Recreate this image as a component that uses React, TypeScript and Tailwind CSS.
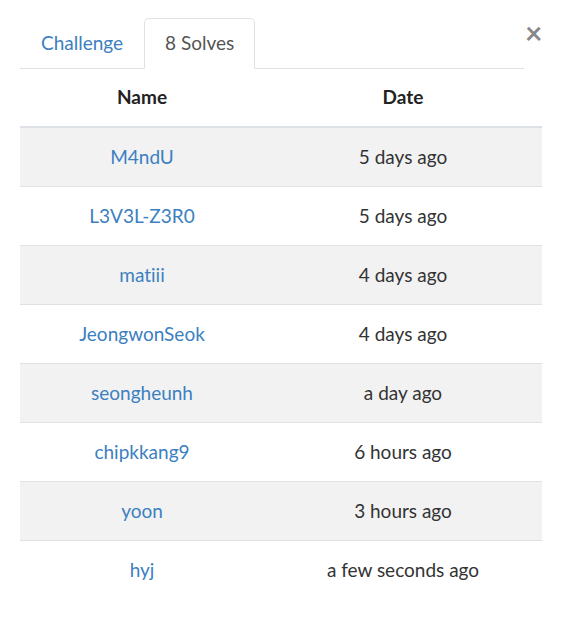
import React from 'react';

const solves = [
  { name: 'M4ndU', date: '5 days ago' },
  { name: 'L3V3L-Z3R0', date: '5 days ago' },
  { name: 'matiii', date: '4 days ago' },
  { name: 'JeongwonSeok', date: '4 days ago' },
  { name: 'seongheunh', date: 'a day ago' },
  { name: 'chipkkang9', date: '6 hours ago' },
  { name: 'yoon', date: '3 hours ago' },
  { name: 'hyj', date: 'a few seconds ago' },
];

export default function App() {
  return (
    <div className="relative w-[567px] h-[629px] bg-white font-['Lato','Noto_Sans',sans-serif] text-[19px] text-[#333] [font-variant-ligatures:none]">
      <button className="absolute left-[525px] top-[17px] text-[30px] leading-none font-bold text-[#888]">×</button>

      <div className="pt-[18px] pl-[20px]">
        {/* tabs */}
        <div className="flex w-[504px] h-[51px] border-b border-[#dee2e6]">
          <div className="h-[51px] px-[21px] flex items-center text-[#3c80c1]">Challenge</div>
          <div className="h-[51px] px-[20px] flex items-center text-[#555] bg-white border border-[#dee2e6] border-b-white rounded-t-[5px]">
            8 Solves
          </div>
        </div>

        {/* table */}
        <div className="w-[522px]">
          <div className="grid grid-cols-[244px_1fr] h-[59px] items-center border-b-2 border-[#dee2e6] font-bold text-[#222]">
            <div className="text-center">Name</div>
            <div className="text-center">Date</div>
          </div>
          {solves.map((s, i) => (
            <div
              key={s.name}
              className={`grid grid-cols-[244px_1fr] h-[59px] items-center ${i < solves.length - 1 ? 'border-b border-[#dee2e6]' : ''} ${i % 2 === 0 ? 'bg-[#f2f2f2]' : 'bg-white'}`}
            >
              <div className="text-center text-[#3c80c1]">{s.name}</div>
              <div className="text-center">{s.date}</div>
            </div>
          ))}
        </div>
      </div>
    </div>
  );
}
